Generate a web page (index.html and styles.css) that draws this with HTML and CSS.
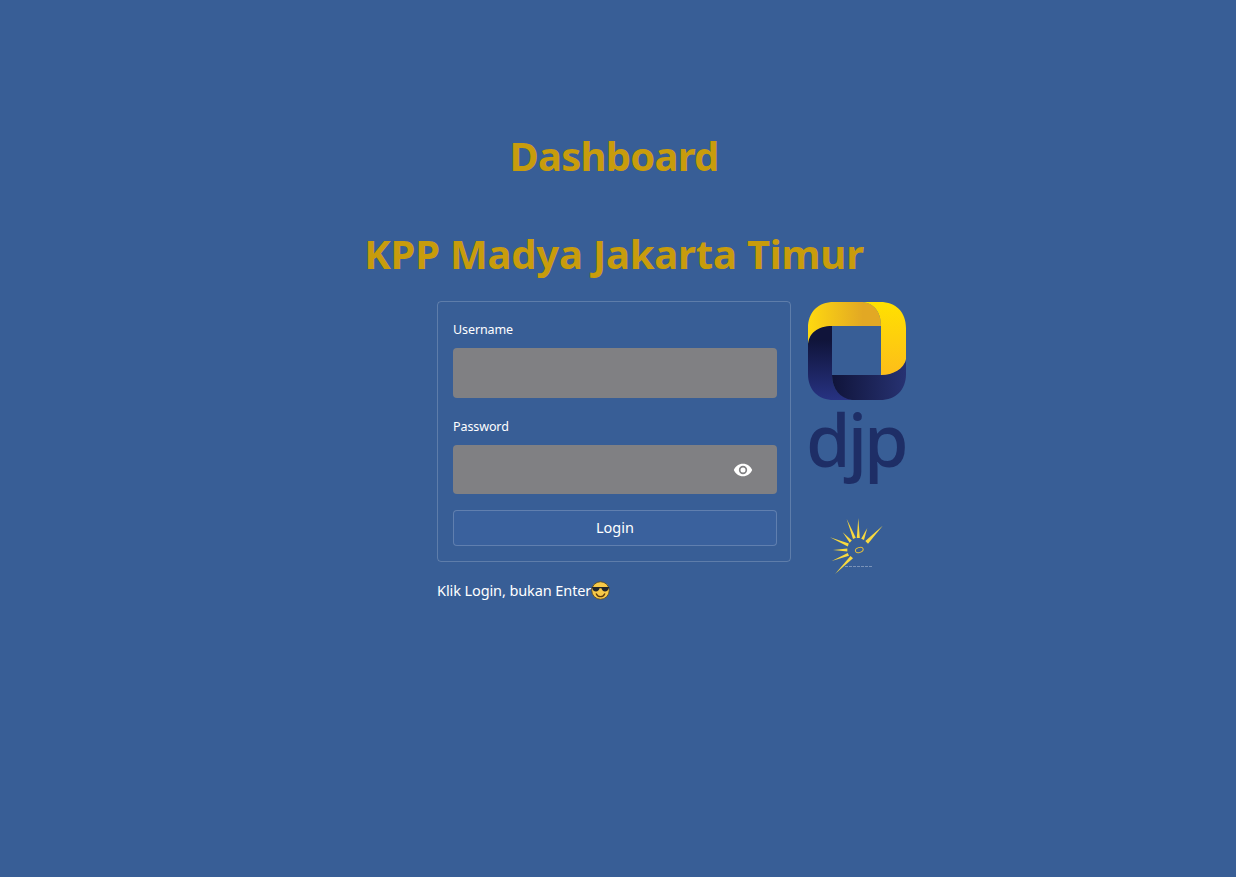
FILE: index.html

```html
<!DOCTYPE html>
<html lang="en">
<head>
    <meta charset="UTF-8">
    <title>Dashboard KPP Madya Jakarta Timur</title>
    <link rel="stylesheet" href="styles.css">
</head>
<body>

<div class="page">
    <h1 class="title title-first">Dashboard</h1>
    <h1 class="title title-second">KPP Madya Jakarta Timur</h1>

    <div class="columns">
        <div class="spacer"></div>

        <div class="form-col">
            <form class="login-form">
                <label for="username">Username</label>
                <div class="field">
                    <input type="text" id="username">
                </div>

                <label for="password">Password</label>
                <div class="field field-password">
                    <input type="password" id="password">
                    <button type="button" class="eye" aria-label="Show password">
                        <svg width="20" height="20" viewBox="0 0 24 24"><path fill="#fff" d="M12 4.5C7 4.5 2.7 7.6 1 12c1.7 4.4 6 7.5 11 7.5s9.3-3.1 11-7.5c-1.7-4.4-6-7.500-11-7.500zM12 17a5 5 0 1 1 0-10 5 5 0 0 1 0 10zm0-8a3 3 0 1 0 0 6 3 3 0 0 0 0-6z"/></svg>
                    </button>
                </div>

                <button type="button" class="login-btn">Login</button>
            </form>
            <p class="note">Klik Login, bukan Enter<svg class="emoji" width="19" height="19" viewBox="0 0 18 18"><circle cx="9" cy="9" r="8.300" fill="#f7c948" stroke="#5b4a1e" stroke-width="0.800"/><path d="M0.800 5.600h16.400v1.300h-0.700c-0.200 2-1.400 3-3.200 3-1.900 0-3-1.200-3.400-3h-1.800c-0.400 1.800-1.500 3-3.400 3-1.800 0-3-1-3.200-3h-0.700z" fill="#22262b"/><path d="M5 12.200c1 1.900 2.500 2.700 4 2.700s3-0.800 4-2.700" fill="none" stroke="#5b3a10" stroke-width="1.200" stroke-linecap="round"/></svg></p>
        </div>

        <div class="logo-col">
            <svg class="djp-mark" width="98" height="100" viewBox="0 0 98 100">
                <defs>
                    <linearGradient id="yellowBand" x1="0" y1="0" x2="1" y2="0">
                        <stop offset="0" stop-color="#ffd90f"/>
                        <stop offset="0.750" stop-color="#e2a824"/>
                    </linearGradient>
                    <linearGradient id="yellowSide" x1="0" y1="0" x2="0" y2="1">
                        <stop offset="0" stop-color="#ffe100"/>
                        <stop offset="1" stop-color="#fdbd1a"/>
                    </linearGradient>
                    <linearGradient id="darkSide" x1="0" y1="0" x2="0" y2="1">
                        <stop offset="0.200" stop-color="#10143a"/>
                        <stop offset="1" stop-color="#273282"/>
                    </linearGradient>
                    <linearGradient id="darkBand" x1="0" y1="0" x2="1" y2="0">
                        <stop offset="0" stop-color="#10143a"/>
                        <stop offset="1" stop-color="#273272"/>
                    </linearGradient>
                </defs>
                <path fill="url(#darkSide)" d="M24 24V74C24 86 30 95 44 99H26C10 99 0 89 0 73V45C0 32 10 24 24 24Z"/>
                <path fill="url(#darkBand)" d="M24 74H73C84 74 92 68 98 60V73C98 89 88 99 72 99H44C32 97 24 88 24 74Z"/>
                <path fill="url(#yellowBand)" d="M26 1H52C66 1 73 11 73 25H24C10 25 0 32 0 45V27C0 11 10 1 26 1Z"/>
                <path fill="url(#yellowSide)" d="M52 1H72C88 1 98 11 98 27V58C96 68 85 74 73 74V25C73 11 66 1 52 1Z"/>
            </svg>
            <div class="djp-word">djp</div>
            <svg class="sun-mark" width="54" height="56" viewBox="0 0 54 56">
                <g fill="#f8d93f">
                    <polygon points="28.300,0 26.800,20 29.800,20"/>
                    <polygon points="16.700,1 23,21 25.800,19.700"/>
                    <polygon points="37.300,10 31.200,20.800 34,22"/>
                    <polygon points="52.700,7.700 35.300,23 38,25.800"/>
                    <polygon points="12.700,14.300 19.700,24.800 21.800,22.600"/>
                    <polygon points="0,19.300 17.800,28.600 18.800,25.500"/>
                    <polygon points="3,32 17.300,33.500 17.300,30.500"/>
                    <polygon points="1.700,43 19,37.700 17.700,35"/>
                    <polygon points="5,56 23,40.300 20.500,38"/>
                </g>
                <ellipse cx="29.300" cy="32" rx="4" ry="2.500" fill="none" stroke="#e4bf3a" stroke-width="1" transform="rotate(-20 29.300 32)"/>
                <path d="M15 48.500h28" stroke="#7a93b8" stroke-width="1" stroke-dasharray="3 1"/>
            </svg>
        </div>
    </div>
</div>

</body>
</html>
```

FILE: styles.css

```css
body {
    font-family: 'Noto Sans', sans-serif;
    background-color: #385e96;
    color: #ffffff;
    margin: 0;
}
.page {
    padding: 130px 8px 0 0;
    min-height: 747px;
}
.title {
    font-size: 40px;
    font-weight: 700;
    line-height: 52px;
    letter-spacing: -0.2px;
    color: #c89c0c;
    text-align: center;
    margin: 0;
}
.title-first {
    letter-spacing: -0.75px;
}
.title-second {
    margin-top: 46px;
}
.columns {
    display: grid;
    grid-template-columns: 1fr 354px 1fr;
    column-gap: 17px;
    margin-top: 21px;
}
.login-form {
    box-sizing: border-box;
    border: 1px solid rgba(250, 250, 250, 0.2);
    border-radius: 4px;
    padding: 15px 13px 15px 15px;
    height: 261px;
}
label {
    display: block;
    font-size: 12.5px;
    letter-spacing: -0.1px;
    line-height: 26px;
    height: 31px;
}
.field {
    display: flex;
    align-items: center;
    height: 50px;
    background: #808083;
    border-radius: 4px;
    margin-bottom: 16px;
}
.field-password {
    height: 49px;
}
.field input {
    flex: 1;
    min-width: 0;
    height: 100%;
    padding: 0 16px;
    border: none;
    background: transparent;
    color: #ffffff;
    outline: none;
}
.eye {
    display: flex;
    border: none;
    background: none;
    padding: 0;
    margin-right: 24px;
}
.login-btn {
    display: block;
    width: 100%;
    height: 36px;
    padding: 0 0 2px;
    background-color: #3a619d;
    color: #ffffff;
    border: 1px solid rgba(250, 250, 250, 0.2);
    border-radius: 4px;
    font-family: inherit;
    font-size: 14.5px;
}
.note {
    display: flex;
    align-items: center;
    margin: 16px 0 0;
    font-size: 14.5px;
    letter-spacing: -0.1px;
    line-height: 24px;
}
.logo-col {
    display: flex;
    flex-direction: column;
    align-items: flex-start;
}
.djp-word {
    box-sizing: border-box;
    width: 98px;
    margin-left: -2px;
    padding-top: 2px;
    font-size: 72px;
    font-weight: 500;
    letter-spacing: -3px;
    line-height: 72px;
    height: 117px;
    color: #1e2e66;
}
.sun-mark {
    margin-left: 22px;
}
```
